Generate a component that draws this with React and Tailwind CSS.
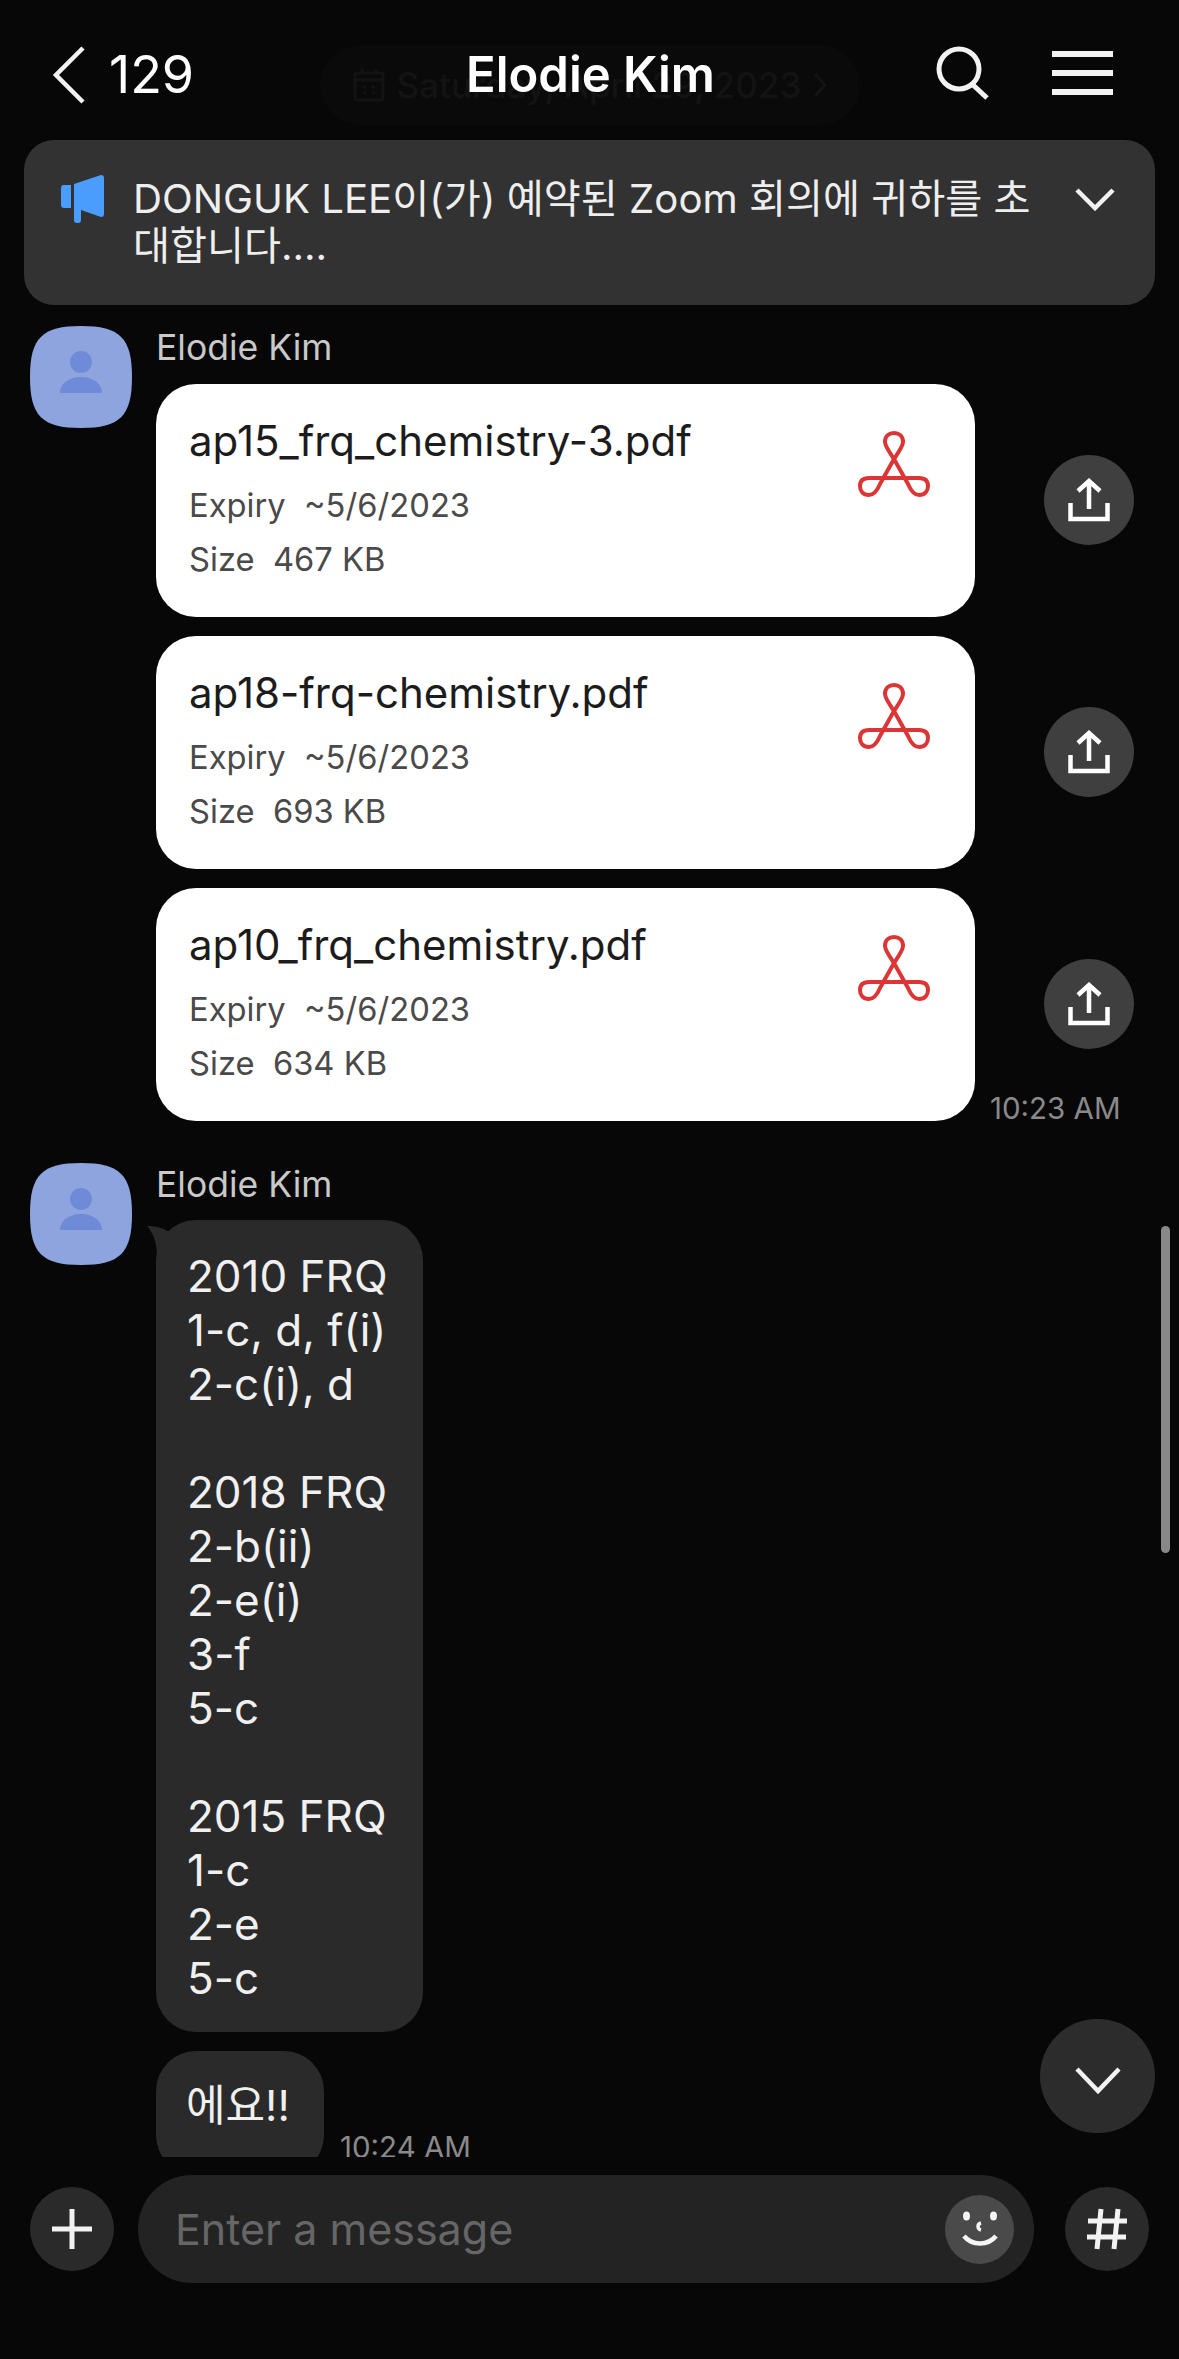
const FONT = "font-['Inter','Noto_Sans_CJK_KR',sans-serif]";

const FILES = [
  { name: "ap15_frq_chemistry-3.pdf", size: "467 KB" },
  { name: "ap18-frq-chemistry.pdf", size: "693 KB" },
  { name: "ap10_frq_chemistry.pdf", size: "634 KB" },
];

const FRQ_LINES = [
  "2010 FRQ", "1-c, d, f(i)", "2-c(i), d", "",
  "2018 FRQ", "2-b(ii)", "2-e(i)", "3-f", "5-c", "",
  "2015 FRQ", "1-c", "2-e", "5-c",
];

function Avatar() {
  return (
    <svg width="102" height="102" viewBox="0 0 102 102" className="shrink-0">
      <path d="M51 0C90 0 102 12 102 51C102 90 90 102 51 102C12 102 0 90 0 51C0 12 12 0 51 0Z" fill="#8ea4de" />
      <circle cx="51" cy="36" r="11" fill="#6f8bd7" />
      <path d="M30 67C30 57 40 51 51 51C62 51 72 57 72 67Z" fill="#6f8bd7" />
    </svg>
  );
}

function PdfIcon() {
  return (
    <svg width="72" height="66" viewBox="0 0 72 66" fill="none" stroke="#dc3535" strokeWidth="4" className="shrink-0">
      <path d="M36 28C30 19 27 15 27 11C27 5 31 2 36 2C41 2 45 5 45 11C45 15 42 19 36 28L22 53C19 60 15 64 11 64C5 64 2 60 2 55C2 50 5 47 11 47H61C67 47 70 50 70 55C70 60 67 64 61 64C57 64 53 60 50 53Z" />
    </svg>
  );
}

function ShareButton() {
  return (
    <div className="mb-[2px] flex h-[90px] w-[90px] shrink-0 items-center justify-center rounded-full bg-[#3f3f3f]">
      <svg width="42" height="44" viewBox="0 0 42 44" fill="none" stroke="#ffffff" strokeWidth="4.5">
        <path d="M21 31V4M10 13L21 3L32 13" />
        <path d="M2.5 25V41H39.5V25" />
      </svg>
    </div>
  );
}

function FileCard({ file }) {
  return (
    <div className="flex items-center gap-[69px]">
      <div className="flex h-[233px] w-[819px] justify-between rounded-[40px] bg-white pl-[33px] pr-[45px] pt-[27px]">
        <div>
          <p className="text-[42px] leading-[60px] text-[#1c1c1c]">{file.name}</p>
          <p className="mt-[14px] text-[32.7px] leading-[40px] text-[#4a4a4a] whitespace-pre">Expiry  ~5/6/2023</p>
          <p className="mt-[14px] text-[32.7px] leading-[40px] text-[#4a4a4a] whitespace-pre">Size  {file.size}</p>
        </div>
        <div className="pt-[20px]">
          <PdfIcon />
        </div>
      </div>
      <ShareButton />
    </div>
  );
}

export default function App() {
  return (
    <div className={`relative h-[2359px] w-[1179px] overflow-hidden bg-[#070707] ${FONT}`}>
      {/* date pill fading out behind the header */}
      <div className="absolute left-[320px] top-[45px] flex h-[80px] w-[540px] items-center justify-center gap-3 rounded-[40px] bg-[#0a0a0a] text-[35px] font-medium text-[#131313]">
        <svg width="32" height="34" viewBox="0 0 32 34" fill="none" stroke="#131313" strokeWidth="3">
          <rect x="2" y="5" width="28" height="27" rx="2" />
          <path d="M2 12H30M9 1V6M23 1V6M10 19H13M19 19H22M10 25H13M19 25H22" />
        </svg>
        <span>Saturday, April 29, 2023</span>
        <svg width="14" height="26" viewBox="0 0 14 26" fill="none" stroke="#131313" strokeWidth="3">
          <path d="M2 2L12 13L2 24" />
        </svg>
      </div>

      <header className="relative flex h-[140px] items-start justify-between pl-[52px] pr-[66px] pt-[46px]">
        <div className="flex items-center gap-[23px] text-white">
          <svg width="34" height="58" viewBox="0 0 34 58" fill="none" stroke="#f2f2f2" strokeWidth="4.5">
            <path d="M31 2L4 29L31 56" />
          </svg>
          <span className="text-[52px] leading-[58px]">129</span>
        </div>
        <h1 className="absolute left-[466px] top-[44px] text-[49px] font-semibold leading-[62px] text-white">Elodie Kim</h1>
        <div className="flex items-center gap-[62px]">
          <svg width="54" height="54" viewBox="0 0 54 54" fill="none" stroke="#f2f2f2" strokeWidth="5">
            <circle cx="23" cy="23" r="20" />
            <path d="M36 38L51 52" />
          </svg>
          <div className="flex h-[44px] w-[61px] flex-col justify-between">
            <div className="h-[6px] bg-[#f2f2f2]" />
            <div className="h-[6px] bg-[#f2f2f2]" />
            <div className="h-[6px] bg-[#f2f2f2]" />
          </div>
        </div>
      </header>

      <div className="relative mx-6 flex h-[165px] items-start rounded-[30px] bg-[#323232] pl-[37px] pr-10 pt-[35px]">
        <svg width="44" height="48" viewBox="0 0 44 48" className="mr-[28px] shrink-0">
          <path d="M3 10H10V33H3C1 33 0 32 0 30V13C0 11 1 10 3 10Z" fill="#4a9dfc" />
          <path d="M13 9L40 0C42 0 43 1 43 3V39C43 41 42 42 40 42L20 35V45C20 47 19 48 17 48H16C14 48 13 47 13 45Z" fill="#4a9dfc" />
        </svg>
        <p className="w-[905px] text-[40.2px] leading-[47px] text-[#eeeeee]">
          DONGUK LEE이(가) 예약된 Zoom 회의에 귀하를 초대합니다....
        </p>
        <svg width="40" height="24" viewBox="0 0 40 24" fill="none" stroke="#f2f2f2" strokeWidth="4.5" className="ml-auto mt-[12px] shrink-0">
          <path d="M2 3L20 21L38 3" />
        </svg>
      </div>

      <main className="h-[1852px] overflow-hidden pl-[30px] pt-[21px]">
        <div className="flex gap-[24px]">
          <Avatar />
          <div>
            <p className="text-[35.5px] leading-[44px] text-[#c9c9c9]">Elodie Kim</p>
            <div className="mt-[14px] flex flex-col gap-[19px]">
              {FILES.map((file) => (
                <FileCard key={file.name} file={file} />
              ))}
            </div>
            <p className="ml-[834px] -mt-[31px] text-[29.5px] leading-[36px] text-[#8a8a8a]">10:23 AM</p>
          </div>
        </div>

        <div className="mt-[37px] flex gap-[24px]">
          <Avatar />
          <div>
            <p className="text-[35.5px] leading-[44px] text-[#c9c9c9]">Elodie Kim</p>
            <div className="relative mt-[13px] w-[267px] rounded-[40px] bg-[#2a2a2a] pb-[27px] pl-[31px] pt-[29px] text-[44px] leading-[54px] text-[#f0f0f0]">
              <svg width="26" height="30" viewBox="0 0 26 30" className="absolute -left-[9px] top-[6px]">
                <path d="M0 0C10 0 16 2 26 8V30H10C10 18 7 8 0 0Z" fill="#2a2a2a" />
              </svg>
              {FRQ_LINES.map((line, index) => (
                <p key={index} className="h-[54px]">{line}</p>
              ))}
            </div>
            <div className="mt-[19px] flex items-end gap-4">
              <div className="flex h-[124px] w-[168px] shrink-0 items-start rounded-[40px] bg-[#2a2a2a] pl-[30px] pt-[27px] text-[43px] leading-[54px] text-[#f0f0f0]">
                에요!!
              </div>
              <p className="mb-[13px] text-[29.5px] leading-[30px] text-[#8a8a8a]">10:24 AM</p>
            </div>
          </div>
        </div>
      </main>

      <footer className="mt-[18px] flex items-center pl-[30px]">
        <div className="flex h-[84px] w-[84px] items-center justify-center rounded-full bg-[#2a2a2a]">
          <svg width="42" height="42" viewBox="0 0 42 42" stroke="#f2f2f2" strokeWidth="5">
            <path d="M21 1V41M1 21H41" />
          </svg>
        </div>
        <div className="ml-6 flex h-[108px] w-[896px] items-center justify-between rounded-[54px] bg-[#232323] pl-[37px] pr-5">
          <span className="text-[43px] text-[#666666]">Enter a message</span>
          <div className="flex h-[69px] w-[69px] items-center justify-center rounded-full bg-[#4a4a4a]">
            <svg width="36" height="36" viewBox="0 0 36 36" fill="none">
              <ellipse cx="4.5" cy="5" rx="3.5" ry="4.5" fill="#f5f5f5" />
              <ellipse cx="31.5" cy="5" rx="3.5" ry="4.5" fill="#f5f5f5" />
              <path d="M19 12C15 13 15 18 19 19" stroke="#f5f5f5" strokeWidth="3.5" />
              <path d="M2 25C10 35 26 35 34 25" stroke="#f5f5f5" strokeWidth="4.5" />
            </svg>
          </div>
        </div>
        <div className="ml-[31px] flex h-[84px] w-[84px] items-center justify-center rounded-full bg-[#2a2a2a]">
          <svg width="42" height="42" viewBox="0 0 42 42" stroke="#f2f2f2" strokeWidth="5">
            <path d="M15 1L11 41M32 1L28 41M2 13H41M1 29H40" />
          </svg>
        </div>
      </footer>

      {/* scroll indicator and jump button float over the list */}
      <div className="absolute left-[1161px] top-[1226px] h-[327px] w-[9px] rounded-full bg-[#888888]" />
      <div className="absolute left-[1040px] top-[2019px] flex h-[114px] w-[115px] items-center justify-center rounded-full bg-[#2c2c2c]">
        <svg width="48" height="30" viewBox="0 0 48 30" fill="none" stroke="#f2f2f2" strokeWidth="4.5" className="mt-[8px]">
          <path d="M3 4L24 26L45 4" />
        </svg>
      </div>
    </div>
  );
}
